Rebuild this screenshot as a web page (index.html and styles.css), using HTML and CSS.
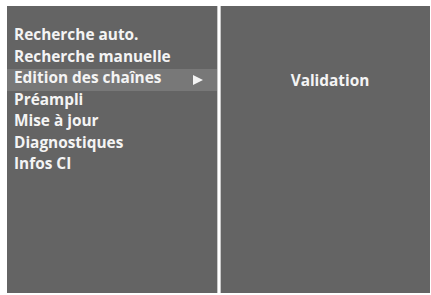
FILE: index.html
```html
<!DOCTYPE html>
<html>
<head>
<meta charset="utf-8">
<link rel="stylesheet" href="styles.css">
</head>
<body>
<div class="screen">
  <div class="panel menu">
    <div class="row">Recherche auto.</div>
    <div class="row">Recherche manuelle</div>
    <div class="row active"><span>Edition des chaînes</span><span class="arrow"></span></div>
    <div class="row">Préampli</div>
    <div class="row">Mise à jour</div>
    <div class="row">Diagnostiques</div>
    <div class="row">Infos CI</div>
  </div>
  <div class="panel sub">
    <div class="label">Validation</div>
  </div>
</div>
</body>
</html>
```
FILE: styles.css
```css
html, body {
  margin: 0;
  padding: 0;
  background: #ffffff;
}
.screen {
  display: flex;
  gap: 2px;
  padding: 6px 0 0 7px;
  font-family: "Open Sans", "DejaVu Sans", sans-serif;
  font-weight: 700;
  font-size: 15.4px;
  color: #f4f4f4;
}
.panel {
  box-sizing: border-box;
  width: 211px;
  height: 287px;
  background: #646464;
  border-right: 1px solid #c8c8c8;
}
.sub {
  width: 210px;
  border-left: 1px solid #c8c8c8;
  border-right: none;
}
.menu {
  padding-top: 20px;
}
.row {
  box-sizing: border-box;
  display: flex;
  align-items: center;
  justify-content: space-between;
  height: 21.5px;
  padding: 0 14px 3px 7px;
  line-height: 18px;
}
.row.active {
  background: #787878;
}
.arrow {
  width: 0;
  height: 0;
  margin-top: 3px;
  border-top: 5px solid transparent;
  border-bottom: 5px solid transparent;
  border-left: 10px solid #f4f4f4;
}
.label {
  text-align: center;
  padding: 65px 0 0 9px;
  line-height: 20px;
}
```
